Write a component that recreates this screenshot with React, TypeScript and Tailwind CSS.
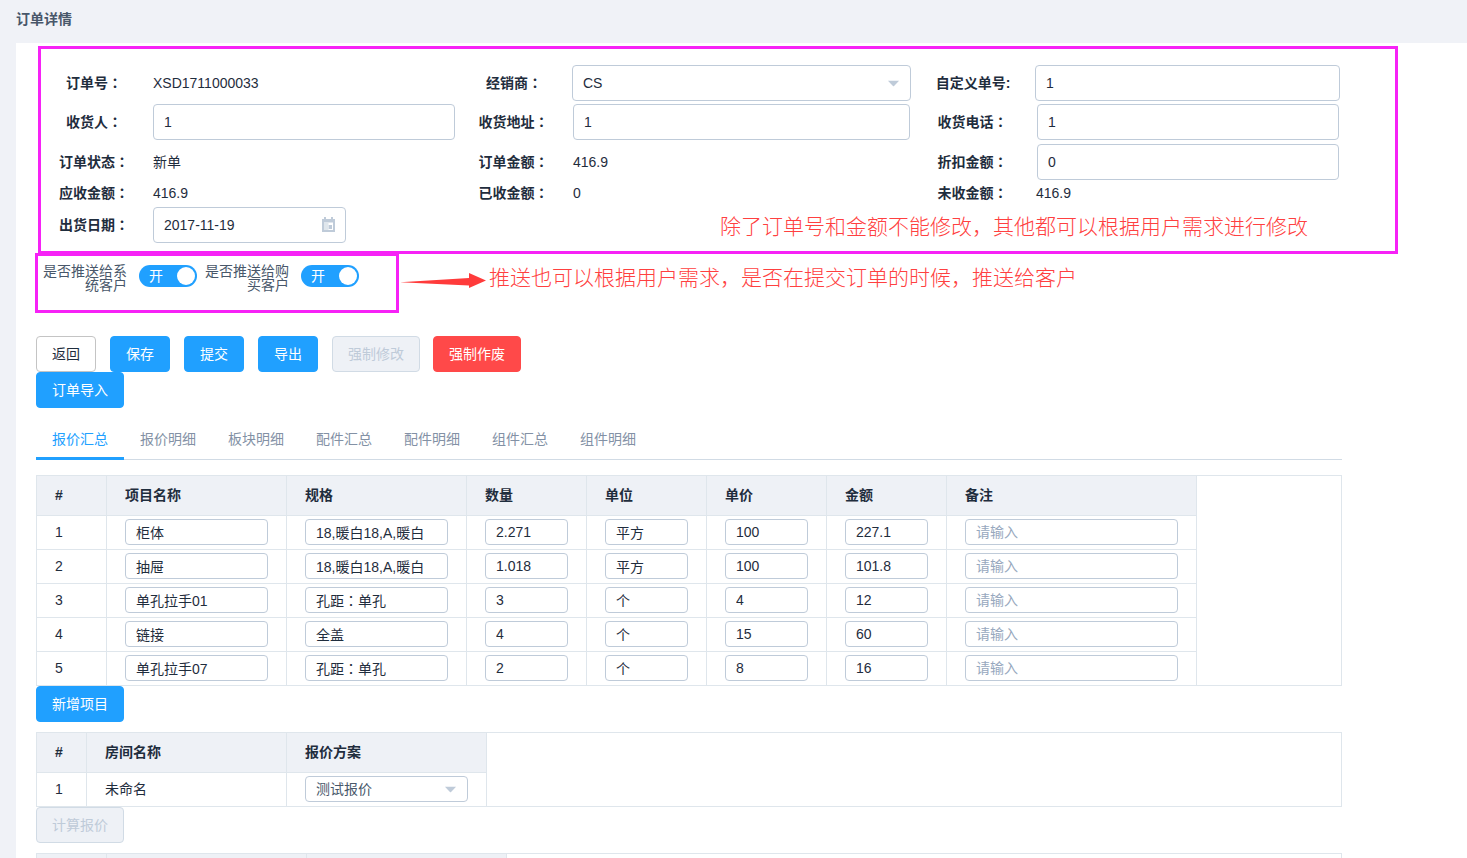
import React from 'react';

const ROWS = [
  { no: 1, name: '柜体', spec: '18,暖白18,A,暖白', qty: '2.271', unit: '平方', price: '100', amount: '227.1' },
  { no: 2, name: '抽屉', spec: '18,暖白18,A,暖白', qty: '1.018', unit: '平方', price: '100', amount: '101.8' },
  { no: 3, name: '单孔拉手01', spec: '孔距：单孔', qty: '3', unit: '个', price: '4', amount: '12' },
  { no: 4, name: '链接', spec: '全盖', qty: '4', unit: '个', price: '15', amount: '60' },
  { no: 5, name: '单孔拉手07', spec: '孔距：单孔', qty: '2', unit: '个', price: '8', amount: '16' },
];

const TABS = ['报价汇总', '报价明细', '板块明细', '配件汇总', '配件明细', '组件汇总', '组件明细'];

const HEADERS = [
  { label: '#', width: 'w-[70px]' },
  { label: '项目名称', width: 'w-[180px]' },
  { label: '规格', width: 'w-[180px]' },
  { label: '数量', width: 'w-[120px]' },
  { label: '单位', width: 'w-[120px]' },
  { label: '单价', width: 'w-[120px]' },
  { label: '金额', width: 'w-[120px]' },
  { label: '备注', width: 'w-[250px]' },
];

const thClass = 'h-10 px-[18px] pb-px text-left text-sm font-bold text-[#1f2d3d] bg-[#eef1f6] border-r border-b border-[#dfe6ec]';
const tdClass = 'px-[18px] pb-px text-sm text-[#1f2d3d] border-r border-[#dfe6ec]';

function Input({ value, placeholder, className = '' }: { value?: string; placeholder?: string; className?: string }) {
  return (
    <input
      readOnly
      defaultValue={value}
      placeholder={placeholder}
      className={`block px-2.5 text-sm text-[#1f2d3d] bg-white border border-[#bfcbd9] rounded placeholder:text-[#97a8be] outline-none ${className}`}
    />
  );
}

function Caret({ className = '' }: { className?: string }) {
  return (
    <svg viewBox="0 0 14 7" className={`w-[13px] h-[7px] ${className}`}>
      <path d="M1 0.5 H13 L7.6 6.3 Q7 6.8 6.4 6.3 Z" fill="#bfcbd9" />
    </svg>
  );
}

// the colon sits centred in its square in the reference, as in the TC face
function Label({ children, className = '' }: { children: string; className?: string }) {
  return (
    <label className={`shrink-0 pb-0.5 text-center text-sm font-bold text-[#1f2d3d] ${className}`}>
      {children}
      <span className="font-['Noto_Sans_CJK_TC']">：</span>
    </label>
  );
}

function Btn({ children, kind = 'primary', className = '' }: { children: React.ReactNode; kind?: 'primary' | 'plain' | 'disabled' | 'danger'; className?: string }) {
  const look = {
    primary: 'bg-[#20a0ff] border-[#20a0ff] text-white',
    plain: 'bg-white border-[#c4c4c4] text-[#1f2d3d]',
    disabled: 'bg-[#eef1f6] border-[#d1dbe5] text-[#bfcbd9]',
    danger: 'bg-[#ff4949] border-[#ff4949] text-white',
  }[kind];
  return <button className={`h-9 border rounded text-sm ${look} ${className}`}>{children}</button>;
}

function Switch() {
  return (
    <div className="relative flex items-center w-[58px] h-[22px] pl-[10px] rounded-full bg-[#20a0ff] text-sm text-white">
      开
      <span className="absolute right-[2px] top-[2px] w-[18px] h-[18px] rounded-full bg-white" />
    </div>
  );
}

function Annotations() {
  return (
    <>
      <div className="absolute left-[38px] top-[46px] w-[1360px] h-[208px] border-[3px] border-[#f622f6]" />
      <div className="absolute left-[35px] top-[253px] w-[364px] h-[60px] border-[3px] border-[#f622f6]" />
      <div className="absolute left-[720px] top-[212px] text-[21px] leading-[30px] font-light text-[#ff4040] whitespace-nowrap">
        除了订单号和金额不能修改，其他都可以根据用户需求进行修改
      </div>
      <div className="absolute left-[489px] top-[263px] text-[21px] leading-[30px] font-light text-[#ff4040] whitespace-nowrap">
        推送也可以根据用户需求，是否在提交订单的时候，推送给客户
      </div>
      <svg viewBox="0 0 86 16" className="absolute left-[400px] top-[273px] w-[86px] h-4">
        <path d="M0 9.3 L69 5 L69 0 L86 7.5 L69 15 L69 12.5 Z" fill="#ff3b3b" />
      </svg>
    </>
  );
}

export default function App() {
  return (
    <div className="relative h-[858px] overflow-hidden bg-[#f0f2f7] font-['Liberation_Sans','Noto_Sans_CJK_SC',sans-serif]">
      <div className="h-[43px] pl-4 pt-[10px] text-sm leading-[18px] font-bold text-[#48576a]">订单详情</div>

      <div className="ml-4 h-[815px] bg-white pl-5 pt-[22px]">
        {/* order form */}
        <div className="flex items-center h-9 text-sm text-[#1f2d3d]">
          <Label className="w-[116px]">订单号</Label>
          <span className="w-[303px] pl-px">XSD1711000033</span>
          <Label className="w-[118px]">经销商</Label>
          <div className="-ml-px w-[339px] h-9 flex items-center justify-between pl-[10px] pr-[10px] border border-[#bfcbd9] rounded text-[#1f2d3d]">
            CS
            <Caret />
          </div>
          <label className="w-[124px] shrink-0 text-center text-sm font-bold">自定义单号:</label>
          <Input value="1" className="w-[305px] h-9" />
        </div>

        <div className="flex items-center h-9 mt-[3px]">
          <Label className="w-[116px]">收货人</Label>
          <Input value="1" className="ml-px w-[302px] h-9" />
          <Label className="w-[117px]">收货地址</Label>
          <Input value="1" className="ml-px w-[337px] h-9" />
          <Label className="w-[125px]">收货电话</Label>
          <Input value="1" className="ml-[2px] w-[302px] h-9" />
        </div>

        <div className="flex items-center h-9 mt-1 text-sm text-[#1f2d3d]">
          <Label className="w-[116px]">订单状态</Label>
          <span className="w-[303px] pl-px">新单</span>
          <Label className="w-[117px]">订单金额</Label>
          <span className="w-[337px] ml-px">416.9</span>
          <Label className="w-[125px]">折扣金额</Label>
          <Input value="0" className="ml-[2px] w-[302px] h-9" />
        </div>

        <div className="flex items-center h-[27px] text-sm text-[#1f2d3d]">
          <Label className="w-[116px]">应收金额</Label>
          <span className="w-[303px] pl-px pb-px">416.9</span>
          <Label className="w-[117px]">已收金额</Label>
          <span className="w-[337px] ml-px pb-px">0</span>
          <Label className="w-[125px]">未收金额</Label>
          <span className="ml-px pb-px">416.9</span>
        </div>

        <div className="flex items-center h-9">
          <Label className="w-[116px]">出货日期</Label>
          <div className="ml-px w-[193px] h-9 flex items-center justify-between pl-2.5 pr-[10px] border border-[#bfcbd9] rounded text-sm text-[#1f2d3d]">
            2017-11-19
            <svg viewBox="0 0 13 15" className="w-[13px] h-[15px] -mt-px">
              <path fillRule="evenodd" d="M0 2 H2 V0 H4 V2 H9 V0 H11 V2 H13 V15 H0 Z M2 5.5 V13 H11 V5.5 Z" fill="#bfcbd9" />
              <rect x="6.5" y="8" width="3.5" height="4" fill="#bfcbd9" />
              <rect x="2" y="5.5" width="4.5" height="7.5" fill="#dfe6ec" />
            </svg>
          </div>
        </div>

        {/* push switches */}
        <div className="flex items-start h-7 mt-[21px] pl-[7px]">
          <div className="w-[84px] text-right text-sm leading-[14px] text-[#48576a]">是否推送给系统客户</div>
          <div className="ml-3 mt-px"><Switch /></div>
          <div className="ml-2 w-[84px] text-right text-sm leading-[14px] text-[#48576a]">是否推送给购买客户</div>
          <div className="ml-3 mt-px"><Switch /></div>
        </div>

        {/* actions */}
        <div className="flex gap-[14px] mt-[44px]">
          <Btn kind="plain" className="w-[60px]">返回</Btn>
          <Btn className="w-[60px]">保存</Btn>
          <Btn className="w-[60px]">提交</Btn>
          <Btn className="w-[60px]">导出</Btn>
          <Btn kind="disabled" className="w-[88px]">强制修改</Btn>
          <Btn kind="danger" className="w-[88px] -ml-px">强制作废</Btn>
        </div>
        <Btn className="block w-[88px]">订单导入</Btn>

        {/* tabs */}
        <div className="flex w-[1306px] h-10 mt-3 border-b border-[#d1dbe5]">
          {TABS.map((tab, i) => (
            <div
              key={tab}
              className={`w-[88px] h-10 flex items-center justify-center text-sm ${i === 0 ? 'text-[#20a0ff] border-b-[3px] border-[#20a0ff] pt-px' : 'text-[#8391a5] pb-[3px]'}`}
            >
              {tab}
            </div>
          ))}
        </div>

        {/* quote summary */}
        <div className="w-[1306px] mt-[15px] border border-[#dfe6ec]">
          <table className="w-[1160px] table-fixed border-separate border-spacing-0">
            <thead>
              <tr>
                {HEADERS.map((h) => (
                  <th key={h.label} className={`${thClass} ${h.width}`}>{h.label}</th>
                ))}
              </tr>
            </thead>
            <tbody>
              {ROWS.map((row, i) => {
                const td = `${tdClass} ${i < ROWS.length - 1 ? 'h-[34px] border-b' : 'h-[33px]'}`;
                const specFont = row.spec.includes('：') ? "font-['Liberation_Sans','Noto_Sans_CJK_TC',sans-serif]" : '';
                return (
                  <tr key={row.no}>
                    <td className={td}>{row.no}</td>
                    <td className={td}><Input value={row.name} className="w-[143px] h-[26px]" /></td>
                    <td className={td}><Input value={row.spec} className={`w-[143px] h-[26px] ${specFont}`} /></td>
                    <td className={td}><Input value={row.qty} className="w-[83px] h-[26px]" /></td>
                    <td className={td}><Input value={row.unit} className="w-[83px] h-[26px]" /></td>
                    <td className={td}><Input value={row.price} className="w-[83px] h-[26px]" /></td>
                    <td className={td}><Input value={row.amount} className="w-[83px] h-[26px]" /></td>
                    <td className={td}><Input placeholder="请输入" className="w-[213px] h-[26px]" /></td>
                  </tr>
                );
              })}
            </tbody>
          </table>
        </div>
        <Btn className="block w-[88px]">新增项目</Btn>

        {/* rooms */}
        <div className="w-[1306px] mt-2.5 border border-[#dfe6ec]">
          <table className="w-[450px] table-fixed border-separate border-spacing-0">
            <thead>
              <tr>
                <th className={`${thClass} w-[50px]`}>#</th>
                <th className={`${thClass} w-[200px]`}>房间名称</th>
                <th className={`${thClass} w-[200px]`}>报价方案</th>
              </tr>
            </thead>
            <tbody>
              <tr>
                <td className={`${tdClass} h-[33px]`}>1</td>
                <td className={`${tdClass} h-[33px]`}>未命名</td>
                <td className={`${tdClass} h-[33px]`}>
                  <div className="w-[163px] h-[26px] flex items-center justify-between pl-2.5 pr-[10px] border border-[#bfcbd9] rounded text-[#48576a]">
                    测试报价
                    <Caret />
                  </div>
                </td>
              </tr>
            </tbody>
          </table>
        </div>
        <Btn kind="disabled" className="block w-[88px]">计算报价</Btn>

        {/* next table, cut off by the window */}
        <div className="w-[1306px] mt-2.5 border border-[#dfe6ec]">
          <table className="w-[470px] table-fixed border-separate border-spacing-0">
            <thead>
              <tr>
                <th className={`${thClass} w-[70px]`} />
                <th className={`${thClass} w-[200px]`} />
                <th className={`${thClass} w-[200px]`} />
              </tr>
            </thead>
          </table>
        </div>
      </div>

      <Annotations />
    </div>
  );
}
